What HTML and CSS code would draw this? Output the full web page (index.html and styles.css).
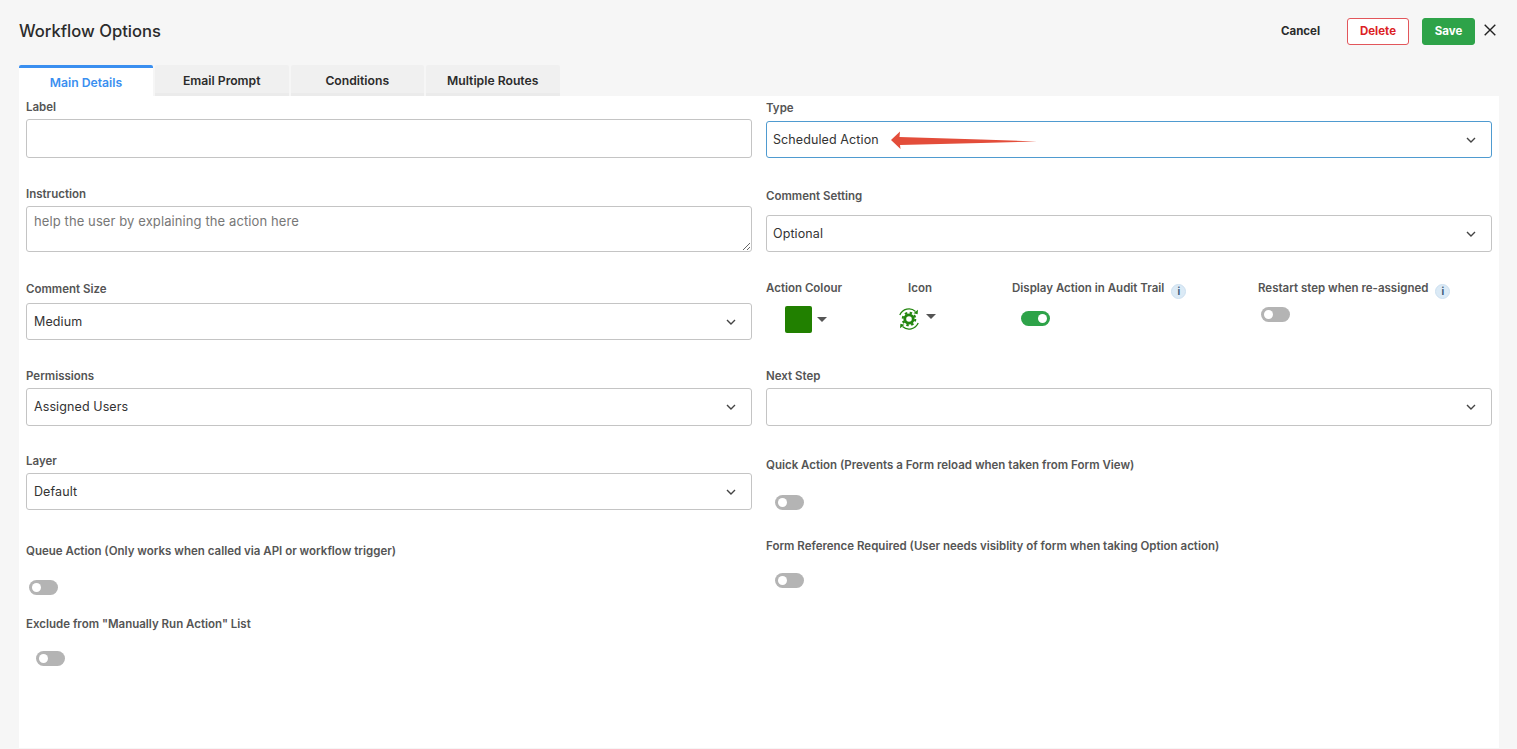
FILE: index.html
```html
<!DOCTYPE html>
<html lang="en">
<head>
<meta charset="utf-8">
<title>Workflow Options</title>
<link rel="stylesheet" href="styles.css">
</head>
<body>
<div class="page">
  <header class="top">
    <h1 class="title">Workflow Options</h1>
    <div class="actions">
      <button class="btn btn-cancel">Cancel</button>
      <button class="btn btn-delete">Delete</button>
      <button class="btn btn-save">Save</button>
      <button class="close" aria-label="Close"><svg width="12" height="12" viewBox="0 0 12 12"><path d="M.7.7l10.6 10.6M11.3.7L.7 11.3" stroke="#222" stroke-width="1.4" fill="none"/></svg></button>
    </div>
  </header>
  <nav class="tabs">
    <a class="tab active">Main Details</a>
    <a class="tab">Email Prompt</a>
    <a class="tab">Conditions</a>
    <a class="tab">Multiple Routes</a>
  </nav>
  <main class="panel">
    <section class="col col-left">
      <div class="field f-label">
        <label class="lbl">Label</label>
        <input class="ctl input" type="text">
      </div>
      <div class="field f-instruction">
        <label class="lbl">Instruction</label>
        <textarea class="ctl area" placeholder="help the user by explaining the action here"></textarea>
      </div>
      <div class="field f-size">
        <label class="lbl">Comment Size</label>
        <div class="ctl select h37">Medium<svg class="chev" width="10" height="6" viewBox="0 0 10 6"><path d="M1 1l4 4 4-4" stroke="#444" stroke-width="1.4" fill="none"/></svg></div>
      </div>
      <div class="field f-perm">
        <label class="lbl">Permissions</label>
        <div class="ctl select h38">Assigned Users<svg class="chev" width="10" height="6" viewBox="0 0 10 6"><path d="M1 1l4 4 4-4" stroke="#444" stroke-width="1.4" fill="none"/></svg></div>
      </div>
      <div class="field f-layer">
        <label class="lbl">Layer</label>
        <div class="ctl select h37">Default<svg class="chev" width="10" height="6" viewBox="0 0 10 6"><path d="M1 1l4 4 4-4" stroke="#444" stroke-width="1.4" fill="none"/></svg></div>
      </div>
      <div class="field f-queue">
        <label class="lbl">Queue Action (Only works when called via API or workflow trigger)</label>
        <span class="toggle t-queue"></span>
      </div>
      <div class="field f-exclude">
        <label class="lbl">Exclude from "Manually Run Action" List</label>
        <span class="toggle t-exclude"></span>
      </div>
    </section>
    <section class="col col-right">
      <div class="field f-type">
        <label class="lbl">Type</label>
        <div class="ctl select h37 focus">Scheduled Action<svg class="chev" width="10" height="6" viewBox="0 0 10 6"><path d="M1 1l4 4 4-4" stroke="#444" stroke-width="1.4" fill="none"/></svg>
          <svg class="arrow" width="146" height="18" viewBox="0 0 146 18"><path d="M0 9L9 0.5 8.5 6 90 8.5 146 10.5 90 12 9 14 9.500 18z" fill="#e34d3a"/></svg>
        </div>
      </div>
      <div class="field f-setting">
        <label class="lbl lbl-wide">Comment Setting</label>
        <div class="ctl select h37">Optional<svg class="chev" width="10" height="6" viewBox="0 0 10 6"><path d="M1 1l4 4 4-4" stroke="#444" stroke-width="1.4" fill="none"/></svg></div>
      </div>
      <div class="opts">
        <div class="opt opt-colour">
          <label class="lbl">Action Colour</label>
          <div class="picker">
            <span class="swatch"></span><span class="caret"></span>
          </div>
        </div>
        <div class="opt opt-icon">
          <label class="lbl">Icon</label>
          <div class="picker picker-icon">
            <svg width="22" height="22" viewBox="0 0 22 22" fill="none" stroke="#23860f">
              <path d="M1.800 7A10 10 0 0 1 17.500 3.400" stroke-width="1.300"/>
              <path d="M20.200 15A10 10 0 0 1 4.500 18.600" stroke-width="1.300"/>
              <path d="M20 1.800L19.600 6.200 15.500 5.200z" fill="#23860f" stroke="none"/>
              <path d="M2 20.200L2.400 15.800 6.500 16.800z" fill="#23860f" stroke="none"/>
              <circle cx="11" cy="11" r="4.200" stroke-width="2.800"/>
              <circle cx="11" cy="11" r="6.300" stroke-width="2" stroke-dasharray="2.470 2.470"/>
            </svg>
            <span class="caret"></span>
          </div>
        </div>
        <div class="opt opt-display">
          <label class="lbl lbl-info">Display Action in Audit Trail <i class="info">i</i></label>
          <span class="toggle on"></span>
        </div>
        <div class="opt opt-restart">
          <label class="lbl lbl-info">Restart step when re-assigned <i class="info">i</i></label>
          <span class="toggle"></span>
        </div>
      </div>
      <div class="field f-next">
        <label class="lbl">Next Step</label>
        <div class="ctl select h38"><svg class="chev" width="10" height="6" viewBox="0 0 10 6"><path d="M1 1l4 4 4-4" stroke="#444" stroke-width="1.4" fill="none"/></svg></div>
      </div>
      <div class="field f-quick">
        <label class="lbl">Quick Action (Prevents a Form reload when taken from Form View)</label>
        <span class="toggle t-quick"></span>
      </div>
      <div class="field f-ref">
        <label class="lbl">Form Reference Required (User needs visiblity of form when taking Option action)</label>
        <span class="toggle t-ref"></span>
      </div>
    </section>
  </main>
</div>
</body>
</html>
```
FILE: styles.css
```css
* { box-sizing: border-box; }
html, body { margin: 0; height: 100%; }
body { background: #f6f6f6; font-family: Inter, "Liberation Sans", sans-serif; color: #333; overflow: hidden; }
.page { padding: 0 15px 0 19px; height: 749px; display: flex; flex-direction: column; }

.top { display: flex; justify-content: space-between; height: 65px; padding-top: 18px; }
.title { margin: 0; font-size: 16.600px; line-height: 27px; font-weight: 500; color: #2b2b2b; }
.actions { display: flex; align-items: flex-start; }
.btn { height: 27px; font: 700 11.500px/1 Inter, "Liberation Sans", sans-serif; border-radius: 3px; padding: 0; background: none; border: 1px solid transparent; }
.btn-cancel { width: 41px; color: #2b2b2b; margin-right: 26px; }
.btn-delete { width: 62px; color: #dc1f26; border-color: #e2565b; background: #fff; margin-right: 13px; }
.btn-save { width: 53px; color: #fff; background: #2ea349; border-color: #2ea349; }
.close { width: 24px; height: 24px; background: none; border: 0; padding: 0 0 0 6px; display: flex; align-items: center; justify-content: flex-start; margin-left: 3px; }

.tabs { display: flex; gap: 2px; height: 31px; }
.tab { width: 133.500px; background: #f0f0f0; border-bottom: 3px solid #ebebeb; border-radius: 2px 2px 0 0; font-size: 12.200px; font-weight: 600; color: #2b2b2b; display: flex; align-items: center; justify-content: center; padding-top: 3px; }
.tab.active { width: 134px; background: #fff; color: #3a8ff0; border-top: 3px solid #3a8ff0; border-bottom: 0; padding-top: 0; }

.panel { flex: 1; background: #fff; display: grid; grid-template-columns: 733px 733px; margin: 0 3px 1px 0; padding: 0 7px; }
.col { display: flex; flex-direction: column; }
.col-left { padding-top: 3px; padding-right: 7px; }
.col-right { padding-top: 4px; padding-left: 7px; }

.field { display: flex; flex-direction: column; }
.lbl { display: block; height: 14px; padding-top: 1px; font-size: 11.500px; line-height: 14px; font-weight: 600; color: #555; white-space: nowrap; }
.ctl { margin-top: 6px; width: 100%; border: 1px solid #c4c4c4; border-radius: 3px; background: #fff; font: 400 12.500px/1 Inter, "Liberation Sans", sans-serif; color: #333; padding: 0 7px; letter-spacing: 0.1px; }
.input { height: 39px; display: block; }
.area { height: 46px; padding: 8px 7px; resize: vertical; display: block; font-size: 13px; }
.area::placeholder { color: #777; opacity: 1; }
.select { position: relative; display: flex; align-items: center; }
.col-right .select { padding-left: 6px; }
.h37 { height: 37px; padding-top: 1px; }
.h38 { height: 38px; }
.focus { border-color: #4f9bd0; margin-top: 7px; }
.chev { position: absolute; right: 15px; top: 50%; margin-top: -3px; }
.arrow { position: absolute; left: 124px; top: 9px; }

.f-instruction { margin-top: 28px; }
.f-size { margin-top: 29px; }
.f-size .ctl { margin-top: 8px; }
.f-perm { margin-top: 28px; }
.f-layer { margin-top: 27px; }
.f-queue { margin-top: 33px; }
.f-exclude { margin-top: 21px; }
.f-setting { margin-top: 30px; }
.f-setting .ctl { margin-top: 13px; }
.f-next { margin-top: 0; }
.f-quick { margin-top: 31px; }
.f-ref { margin-top: 28px; }

.toggle { display: block; position: relative; width: 29px; height: 15px; border-radius: 8px; background: #b4b4b4; flex: none; }
.toggle::after { content: ""; position: absolute; left: 3px; top: 3px; width: 9px; height: 9px; border-radius: 50%; background: #fff; }
.toggle.on { background: #2ea349; }
.toggle.on::after { left: auto; right: 3px; }
.t-queue { margin: 23px 0 0 3px; }
.t-exclude { margin: 21px 0 0 10px; }
.t-quick { margin: 24px 0 0 9px; }
.t-ref { margin: 21px 0 0 9px; }

.opts { display: grid; grid-template-columns: 123px 123px 246px 1fr; height: 88px; margin-top: 28px; }
.opt-colour { width: 77px; }
.opt-icon { width: 62px; text-align: center; }
.picker { display: flex; align-items: center; justify-content: center; gap: 5px; margin-top: 12px; }
.picker-icon { gap: 6px; margin-top: 14px; margin-left: -7px; }
.swatch { width: 27px; height: 27px; background: #218000; border-radius: 2px; margin-left: 2px; }
.caret { width: 0; height: 0; border: 5px solid transparent; border-top-color: #555; border-bottom: 0; }
.picker-icon .caret { margin-top: -5px; }
.lbl-info { display: flex; align-items: flex-start; gap: 7px; }
.info { display: block; flex: none; width: 15px; height: 15px; margin-top: 3px; border-radius: 50%; background: #dbeaf6; border: 1px solid #cde0f0; font: 700 10px/13px Inter, "Liberation Sans", sans-serif; text-align: center; color: #3a5a78; }
.opt-display .toggle { margin: 17px 0 0 9px; }
.opt-restart .toggle { margin: 13px 0 0 3px; }
```
